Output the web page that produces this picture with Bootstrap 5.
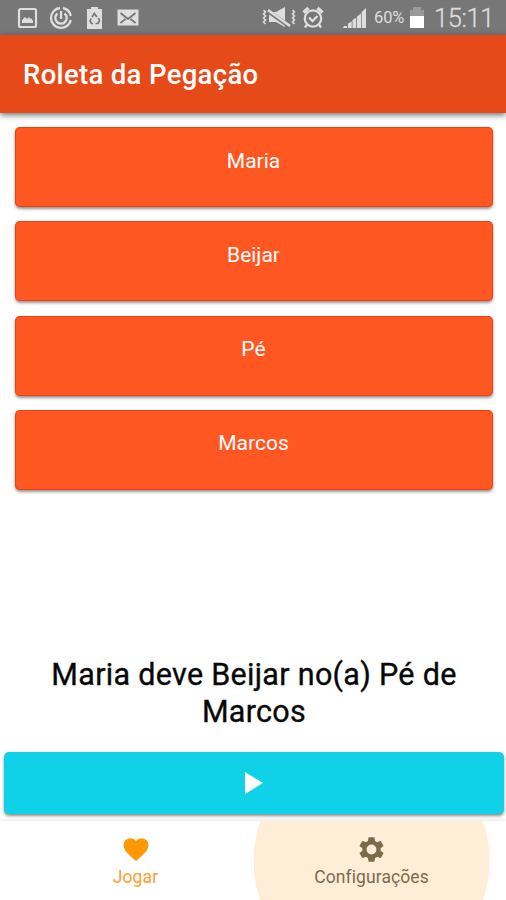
<!DOCTYPE html>
<html lang="pt-BR">
<head>
<meta charset="utf-8">
<meta name="viewport" content="width=device-width, initial-scale=1">
<title>Roleta da Pegação</title>
<link href="https://cdn.jsdelivr.net/npm/bootstrap@5.3.0/dist/css/bootstrap.min.css" rel="stylesheet">
<style>
body { font-family: Roboto, "Liberation Sans", sans-serif; background: #fff; }
svg { display: block; flex: none; }
.screen { height: 900px; overflow: hidden; }
.status-bar { height: 35px; background: #777; color: #dedede; padding: 0 12px 0 16px; }
.status-bar .percent { font-size: 16.5px; line-height: 37px; width: 32px; margin-left: 7px; letter-spacing: -.1px; }
.status-bar .clock { font-size: 25.5px; line-height: 38px; width: 60px; margin-left: 9px; font-weight: 300; letter-spacing: -.4px; -webkit-text-stroke: .3px #dedede; }
.signal { margin-left: 18px; }
.battery { margin-left: 3px; }
.app-bar { height: 78px; background: #e64a19; box-shadow: 0 2px 6px rgba(0,20,25,.6); padding: 0 23px; }
.app-title { font-size: 27.5px; font-weight: 500; line-height: 79px; letter-spacing: .33px; color: #fff; }
.slots { padding: 14px 13.5px 0 14.5px; gap: 14.3px; }
.slot { height: 80px; border: 0; border-radius: 5px; background: #ff5722; color: #fff; font-size: 21px; line-height: 24px; padding-top: 21.5px; box-shadow: 0 2px 3px rgba(0,0,0,.42), inset 0 0 0 1px rgba(225,40,0,.5); }
.result { font-size: 30.5px; line-height: 36.5px; letter-spacing: .3px; color: #080808; padding: 0 29px 0 31px; margin-bottom: 22px; -webkit-text-stroke: .35px #080808; }
.play-wrap { padding: 0 2.5px 7px 3.5px; }
.play { height: 62px; border: 0; border-radius: 5px; background: #0fd2e8; padding: 0; box-shadow: 0 2px 3px rgba(0,0,0,.45); }
.tabs { height: 79px; overflow: hidden; box-shadow: 0 -1px 4px rgba(0,0,0,.1); background: #fff; }
.tab { font-size: 17.5px; line-height: 22px; letter-spacing: .1px; padding-top: 15px; text-decoration: none; }
.tab svg { margin-bottom: 3px; }
.tab-play { color: #ff9d2e; width: 254px; padding-left: 17px; }
.tab-settings { color: #7d6a4d; width: 236px; background: radial-gradient(circle at 117.5px 40px, #feeed8 117.5px, #fff 118.5px); padding-right: 1px; }
</style>
</head>
<body>
<div class="screen d-flex flex-column">
  <div class="status-bar d-flex align-items-center flex-shrink-0">
    <svg width="22" height="22" viewBox="0 0 22 22"><rect x="3" y="2" width="17" height="18" rx="1.5" fill="none" stroke="#dedede" stroke-width="2.2"/><path d="M6 16v-3l3-3 2 2 2-2 1 2 1-1 2 3v2z" fill="#dedede"/></svg>
    <svg class="ms-2" width="30" height="24" viewBox="0 0 30 24" fill="none" stroke="#dedede" stroke-width="2.3"><path d="M14 2A10 10 0 1 0 24.8 14"/><path d="M17 2A10 10 0 0 1 24.8 10"/><path d="M11.5 7.5A5.7 5.7 0 1 0 18.5 7.5"/><path d="M15 5v8"/></svg>
    <svg class="ms-2" width="22" height="24" viewBox="0 0 22 24"><path d="M3 3h4V1h7v2h4v20H3z" fill="#dedede"/><g fill="none" stroke="#777" stroke-width="1.7"><path d="m8 11 2.300-3.500 2.600 3.500M14.500 12l1 3-1.500 2.500h-2.500M9.200 17.500H7.500L6 15l1.200-2.500"/></g></svg>
    <svg class="ms-1" width="30" height="20" viewBox="0 0 30 20"><rect x="7.500" y="1.500" width="21" height="16" fill="#dedede"/><path d="m10.500 5 7.500 6 7.500-6M10.500 15l5-4M25.500 15l-5-4" fill="none" stroke="#777" stroke-width="1.800"/></svg>

    <svg class="ms-auto" width="36" height="24" viewBox="0 0 36 24" fill="none" stroke="#dedede"><path d="m2.500 4 2 2-2 2 2 2-2 2 2 2-2 2 2 2M31.500 4l2 2-2 2 2 2-2 2 2 2-2 2 2 2" stroke-width="1.600"/><path d="M8 6h7l9-5v20l-9-5H8z" fill="#dedede" stroke="none"/><path d="m7 5 21 15" stroke="#777" stroke-width="4.500"/><path d="m7 4 22 16" stroke-width="2.700"/></svg>
    <svg class="ms-1" width="24" height="24" viewBox="0 0 24 24" fill="none" stroke="#dedede" stroke-width="2.300"><circle cx="12" cy="12.500" r="8.200"/><path d="m8 11.500 3.500 3.500 5-5"/><path d="m2.500 6.500 5-4.500M21.500 6.500l-5-4.500" stroke-width="3.500"/><path d="m6 18.500-2 3M18 18.500l2 3"/></svg>
    <svg class="signal" width="24" height="24" viewBox="0 0 24 24" fill="#dedede"><path d="M1 20h3v2H0zM5 17.500l3.700-2V22H5zM9.500 14l3.700-2.500V22H9.500zM14 10.500l4-3V22h-4zM18.700 6l4.300-4v20h-4.300z"/></svg>
    <span class="percent">60%</span>
    <svg class="battery" width="16" height="24" viewBox="0 0 16 24"><path d="M1 4h3V1h8v3h3v7H1z" fill="#999"/><path d="M1 10h14v12H1z" fill="#fff"/></svg>
    <span class="clock">15:11</span>
  </div>

  <header class="app-bar flex-shrink-0"><h1 class="app-title m-0">Roleta da Pegação</h1></header>

  <main class="d-flex flex-column flex-grow-1">
    <div class="slots d-flex flex-column">
      <div class="slot text-center">Maria</div>
      <div class="slot text-center">Beijar</div>
      <div class="slot text-center">Pé</div>
      <div class="slot text-center">Marcos</div>
    </div>
    <p class="result text-center mt-auto">Maria deve Beijar no(a) Pé de Marcos</p>
    <div class="play-wrap">
      <button type="button" class="play w-100 d-flex align-items-center justify-content-center" aria-label="Girar">
        <svg width="20" height="24" viewBox="0 0 20 24"><path d="M1 1v22l18-11z" fill="#fff"/></svg>
      </button>
    </div>
  </main>

  <nav class="tabs d-flex flex-shrink-0">
    <a href="#" class="tab tab-play d-flex flex-column align-items-center">
      <svg width="28" height="27" viewBox="0 0 28 27"><path d="m14 25-2-1.700C5 17 1.500 13.600 1.500 9A6.700 6.700 0 0 1 8.300 2.200c2.200 0 4.300 1 5.700 2.700a7.500 7.500 0 0 1 5.700-2.700A6.700 6.700 0 0 1 26.500 9c0 4.600-3.500 8-10.500 14.300z" fill="#ff9800"/></svg>
      <span>Jogar</span>
    </a>
    <a href="#" class="tab tab-settings d-flex flex-column align-items-center">
      <svg width="31" height="27" viewBox="-.5 1 25 22"><path fill="#7d6a4d" d="M19.430 12.980c.04-.32.070-.64.070-.98s-.03-.66-.07-.98l2.110-1.650c.19-.15.240-.42.120-.64l-2-3.460c-.12-.22-.39-.3-.61-.22l-2.490 1c-.52-.4-1.080-.73-1.690-.98l-.38-2.650A.488.488 0 0 0 14 2h-4c-.25 0-.46.180-.49.420l-.38 2.650c-.61.250-1.170.590-1.690.980l-2.490-1c-.23-.09-.49 0-.61.220l-2 3.460c-.13.220-.07.490.12.640l2.110 1.650c-.04.320-.07.650-.07.980s.03.660.07.980l-2.110 1.650c-.19.150-.24.420-.12.640l2 3.460c.12.220.39.300.61.220l2.490-1c.52.400 1.080.730 1.690.980l.38 2.650c.03.240.24.420.49.420h4c.25 0 .46-.18.490-.42l.38-2.650c.61-.25 1.170-.59 1.690-.98l2.490 1c.23.090.49 0 .61-.22l2-3.460c.12-.22.070-.49-.12-.64zM12 16a4 4 0 1 1 0-8 4 4 0 0 1 0 8z"/></svg>
      <span>Configurações</span>
    </a>
  </nav>
</div>
<script src="https://cdn.jsdelivr.net/npm/bootstrap@5.3.0/dist/js/bootstrap.bundle.min.js"></script>
</body>
</html>
